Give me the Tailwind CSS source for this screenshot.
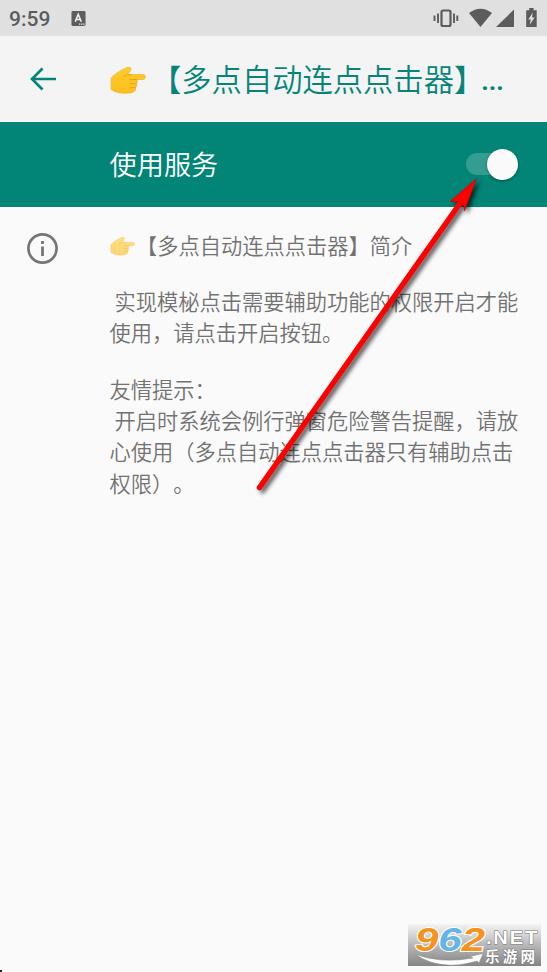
<!DOCTYPE html>
<html lang="zh-CN">
<head>
<meta charset="utf-8">
<title>使用服务</title>
<script src="https://cdn.jsdelivr.net/npm/@tailwindcss/browser@4"></script>
</head>
<body class="relative flex h-[972px] w-[547px] flex-col overflow-hidden bg-[#fafafa] font-['Noto_Sans_CJK_SC',sans-serif] font-[350] [text-spacing-trim:space-all]">
<svg class="absolute size-0" aria-hidden="true">
  <defs>
    <linearGradient id="skin" x1="0" y1="0" x2="0" y2="1"><stop offset="0" stop-color="#ffcc2b"/><stop offset="1" stop-color="#fdc01c"/></linearGradient>
    <symbol id="hand" viewBox="0 0 36 28">
      <path fill="url(#skin)" stroke="#f0a51c" stroke-width=".6" d="M1.2 12C4 9 8 6 11 4.500L17 1.500C20 .5 22 2.500 20.500 4.500L17.500 8.600H33C36 8.600 36 13.200 33 13.500H26.500C27.800 14.800 27.600 17 26.200 17.700C27.200 19.200 26.800 21 25.400 21.700C26 23.600 25 25.200 23.500 25.800C22 27.200 18 27.200 14 27.200C8 27 5 26 1.200 23.500Z"/>
      <path fill="none" stroke="#e8a010" stroke-width=".9" stroke-linecap="round" d="M20 13.500H26.500M20 17.700H26.200M20 21.700H25.400M13.500 11L17.500 8.600H21"/>
    </symbol>
  </defs>
</svg>

<header class="flex h-9 shrink-0 items-center justify-between bg-[#e0e0e0] pl-[9px] pr-2.5 text-[#5c5c5c]">
  <div class="flex items-center gap-[20px]">
    <span class="w-[42px] whitespace-nowrap pt-px font-[Roboto,sans-serif] text-[21px] leading-9 font-medium">9:59</span>
    <svg class="size-[15px]" viewBox="0 0 15 16"><rect width="15" height="16" rx="1.500" fill="#5c5c5c"/><path d="M4 11.500L7.200 3.500L10.500 11.500M5.200 9H9.300" fill="none" stroke="#eee" stroke-width="1.700"/><path d="M8 14h1.400M10.300 14h1.400M12.500 14h1.400" stroke="#eee" stroke-width="1.200"/></svg>
  </div>
  <svg class="h-[22px] w-[104px]" viewBox="433 7 104 22" fill="#5c5c5c">
    <rect x="441.500" y="10.500" width="9" height="15.500" rx="1.500" fill="none" stroke="#5c5c5c" stroke-width="2.200"/>
    <path d="M434.500 15.500V21M438 13.500V23M454 13.500V23M457.300 15.500V21" stroke="#5c5c5c" stroke-width="1.900"/>
    <path d="M469 13Q480.500 4.500 492 13L480.500 27Z"/><path d="M496 27L514 9.500V27Z"/>
    <path d="M527 10.200h2.200V8h4.400v2.200H536.700V27H526.200V10.200Z"/><path d="M532.800 12.500L528.300 19.500H530.800L529.600 25L534.600 17.500H532Z" fill="#e0e0e0"/>
  </svg>
</header>

<div class="flex h-[85.500px] shrink-0 items-center bg-[#f4f4f4] pl-[30px] text-[#05857a]">
  <svg class="h-6 w-[26px]" viewBox="0 0 26 24"><path d="M12.500 1.500L2 12L12.500 22.500M2 12H26" fill="none" stroke="#05857a" stroke-width="2.700"/></svg>
  <h1 class="-mt-[2px] ml-[54px] flex items-center whitespace-nowrap text-[30.300px] leading-[42px] font-[350]">
    <svg class="mt-[4px] mr-[5px] h-[28px] w-[36px]"><use href="#hand"/></svg><span class="mt-px">【多点自动连点点击器】</span><span class="mt-[7px] -ml-[3px] font-[Roboto,sans-serif] text-[26px] font-bold">...</span>
  </h1>
</div>

<div class="flex h-[85px] shrink-0 items-center justify-between bg-[#028576] pr-[30px] pl-[109.500px]">
  <span class="-mt-[3px] text-[27.200px] leading-10 text-white">使用服务</span>
  <div class="flex h-[22px] w-[51px] items-center justify-end rounded-full bg-white/20"><div class="mr-[-1px] size-[31px] shrink-0 rounded-full bg-[#fafafa] shadow-[0_1px_3px_rgba(0,0,0,.4)]"></div></div>
</div>

<main class="flex items-start pt-[22px] pl-[27px] text-[#727272]">
  <svg class="mt-[4px] size-[31px] shrink-0" viewBox="0 0 31 31"><circle cx="15.500" cy="15.500" r="14.100" fill="none" stroke="#757575" stroke-width="2.700"/><path d="M15.500 8V11M15.500 13.500V23" stroke="#757575" stroke-width="2.800"/></svg>
  <div class="ml-[51.500px] flex flex-col whitespace-pre text-[21.250px] leading-[31.300px]">
    <div class="flex items-center"><svg class="mt-[3px] mr-[1.500px] h-[20px] w-[25px] opacity-60"><use href="#hand"/></svg><span>【多点自动连点点击器】简介</span></div>
    <div class="mt-[25px] pl-[5px]">实现模柲点击需要辅助功能的权限开启才能</div>
    <div>使用，请点击开启按钮。</div>
    <div class="mt-[25.500px]">友情提示：</div>
    <div class="pl-[5px]">开启时系统会例行弹窗危险警告提醒，请放</div>
    <div>心使用（多点自动连点点击器只有辅助点击</div>
    <div>权限）。</div>
  </div>
</main>

<svg class="absolute top-[160px] left-[240px] h-[350px] w-[260px] drop-shadow-[3px_3px_2px_rgba(0,0,0,.65)]" viewBox="240 160 260 350"><path d="M259.500 487.500L461 202" stroke="#f00" stroke-width="5.500" stroke-linecap="round"/><path d="M476.500 178.500L450 201.500L458 201.500L464 206L464.500 211Z" fill="#f00" stroke="#b00" stroke-width=".5"/></svg>

<div class="absolute top-[924px] left-[408px] h-[42px] w-[133px] bg-linear-to-b from-[#f4f4f4] via-[#b8b8b8] to-[#858585]">
  <svg class="h-[42px] w-[133px] overflow-visible" viewBox="0 0 133 42">
    <g font-family="Liberation Sans, sans-serif" font-weight="700" font-style="italic" font-size="33" stroke="#fff" stroke-width="2" paint-order="stroke"><text x="7" y="26.500" textLength="70" lengthAdjust="spacingAndGlyphs"><tspan fill="#f6921e">9</tspan><tspan fill="#65b5e5">6</tspan><tspan fill="#f6921e">2</tspan></text></g>
    <text x="78" y="20" textLength="53" lengthAdjust="spacingAndGlyphs" font-family="Liberation Sans, sans-serif" font-weight="700" font-size="17.500" letter-spacing="1.500" fill="#fff" stroke="#777" stroke-width="1" paint-order="stroke">.NET</text>
    <text x="77" y="37.500" textLength="50" font-family="Noto Sans CJK SC, sans-serif" font-weight="700" font-size="14.500" fill="#fff" stroke="#777" stroke-width="1" paint-order="stroke">乐游网</text>
    <path d="M7 30Q32 40 65 34L62 32.500L75 29.500L71 39L69 37Q32 48 7 30Z" fill="#fff" stroke="#888" stroke-width=".5"/>
  </svg>
</div>
<div class="absolute bottom-0 left-0 size-0.5 bg-[#222]"></div>
</body>
</html>
